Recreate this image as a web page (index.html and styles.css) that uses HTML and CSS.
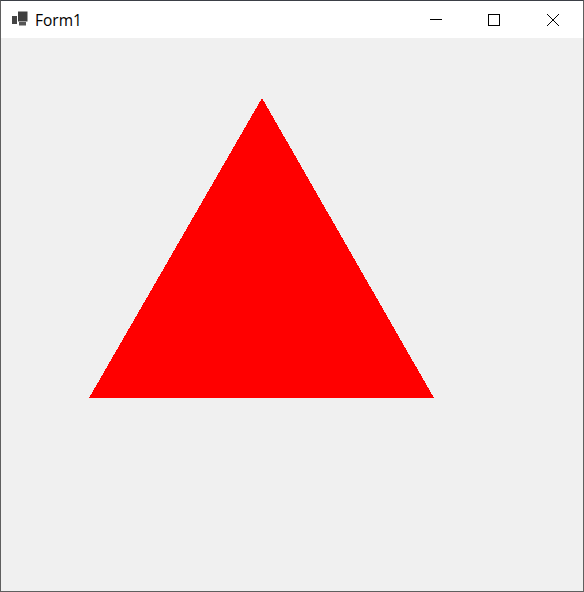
FILE: index.html
```html
<!DOCTYPE html>
<html lang="en">
<head>
  <meta charset="UTF-8">
  <title>Form1</title>
  <link rel="stylesheet" href="styles.css">
</head>
<body>
  <div class="window">
    <div class="titleBar">
      <svg class="appIcon" width="18" height="17" viewBox="0 0 18 17">
        <rect x="6" y="0.5" width="9.5" height="10" fill="#3f3f3f"/>
        <rect x="0" y="5" width="5" height="8" fill="#444"/>
        <rect x="7" y="11" width="7" height="3.5" fill="#555"/>
      </svg>
      <span class="title">Form1</span>
      <div class="controls">
        <button class="control">
          <svg width="14" height="14" viewBox="0 0 14 14"><path d="M2 6.5H14" stroke="#000" fill="none"/></svg>
        </button>
        <button class="control">
          <svg width="14" height="14" viewBox="0 0 14 14"><rect x="1.5" y="1.5" width="11" height="11" stroke="#000" fill="none"/></svg>
        </button>
        <button class="control">
          <svg width="14" height="14" viewBox="0 0 14 14"><path d="M1 1L13 13M13 1L1 13" stroke="#000" fill="none"/></svg>
        </button>
      </div>
    </div>
    <div class="client">
      <svg class="canvas" width="582" height="553" viewBox="0 0 582 553">
        <polygon points="261,60 433,360 88,360" fill="#ff0000" shape-rendering="crispEdges"/>
      </svg>
    </div>
  </div>
</body>
</html>
```

FILE: styles.css
```css
body {
  margin: 0;
  font-family: "Open Sans", "Noto Sans", sans-serif;
  overflow: hidden;
}

.window {
  width: 584px;
  height: 592px;
  box-sizing: border-box;
  display: flex;
  flex-direction: column;
  border: 1px solid #5f5f5f;
  border-top-color: #3b3f46;
}

.titleBar {
  height: 37px;
  flex-shrink: 0;
  display: flex;
  align-items: center;
  background-color: #fff;
  padding-left: 11px;
  padding-right: 1px;
}

.appIcon {
  margin-right: 5px;
}

.title {
  font-size: 15.5px;
  color: #000;
}

.controls {
  display: flex;
  margin-left: auto;
}

.control {
  width: 59px;
  height: 37px;
  padding: 0;
  border: none;
  background: none;
  display: flex;
  align-items: center;
  justify-content: center;
}

.client {
  flex: 1;
  background-color: #f0f0f0;
}

.canvas {
  display: block;
}
```
